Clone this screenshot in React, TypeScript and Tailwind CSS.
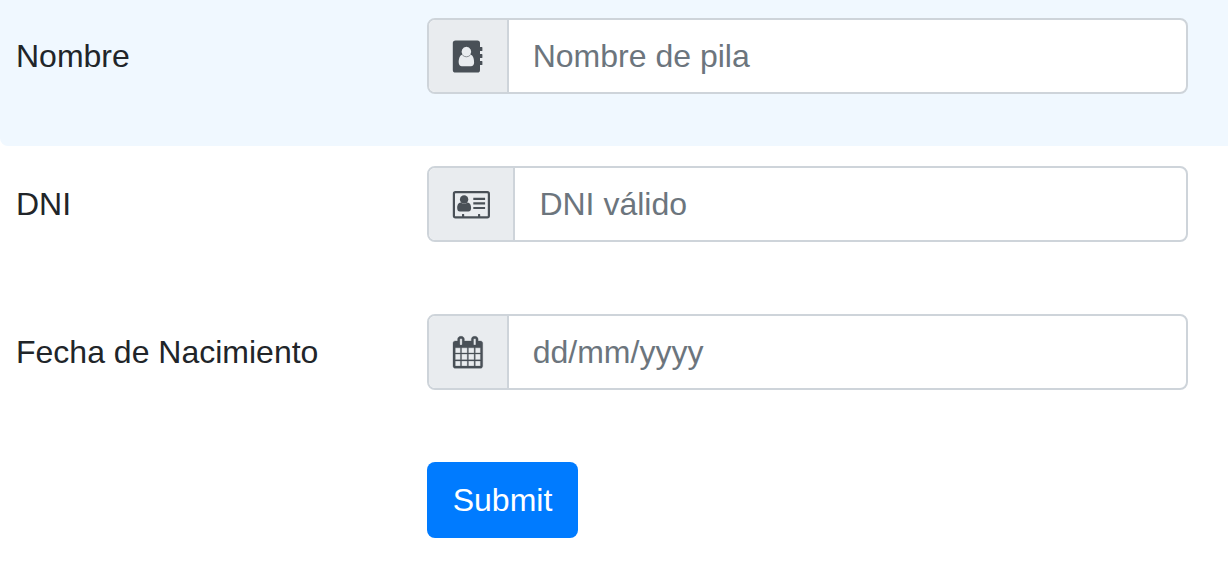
import type { ReactNode } from "react";

function AddressBookIcon() {
  return (
    <svg className="block h-9 w-[29.71px] overflow-visible" viewBox="0 0 29.71 36" fill="currentColor">
      <path
        fillRule="evenodd"
        d="M2.6 2.4H24.4Q27 2.4 27 5V9H28.8Q29.4 9 29.4 9.6V12.4Q29.4 13 28.8 13H27V16H28.8Q29.4 16 29.4 16.6V19.4Q29.4 20 28.8 20H27V23H28.8Q29.4 23 29.4 23.6V26.4Q29.4 27 28.8 27H27V32Q27 34.6 24.4 34.6H2.6Q-0.2 34.6 -0.2 32V5Q-0.2 2.4 2.6 2.4ZM13.4 8.8A4.8 4.8 0 0 0 9.5 16.4C6.5 17 5.7 21 5.7 24.5C5.7 26.8 7.1 28.2 8.8 28.2H18C19.8 28.2 21.1 26.8 21.1 24.5C21.1 21 20.3 17 17.3 16.4A4.8 4.8 0 0 0 13.4 8.8Z"
      />
      <path d="M9.5 17.2Q13.4 20.4 17.3 17.2" fill="none" stroke="currentColor" strokeWidth="0.6" />
    </svg>
  );
}

function IdCardIcon() {
  return (
    <svg className="block h-9 w-[36.4px] overflow-visible" viewBox="0 0 36.4 36" fill="currentColor">
      <rect x="0.9" y="6.1" width="35" height="25.2" rx="1.6" fill="none" stroke="currentColor" strokeWidth="2.2" />
      <circle cx="11.1" cy="13.5" r="4.2" />
      <path d="M7.7 16.5Q11.1 19.4 14.5 16.5C17.4 16.7 18.1 19.9 18.1 22.2C18.1 24.2 17 25.5 15.4 25.5H6.8C5.2 25.5 4.2 24.2 4.2 22.2C4.2 19.9 4.8 16.7 7.7 16.5Z" />
      <path d="M20.3 12.9H32.1M20.3 17.4H32.1M20.3 22H32.1" fill="none" stroke="currentColor" strokeWidth="2.2" />
      <path d="M9 28.4Q9 28 9.4 28H10.8Q11.2 28 11.2 28.4V31H9ZM25 28.4Q25 28 25.4 28H26.8Q27.2 28 27.2 28.4V31H25Z" />
    </svg>
  );
}

function CalendarIcon() {
  return (
    <svg
      className="block h-8 w-[29.71px] overflow-visible"
      viewBox="64 -20 1664 1792"
      fill="currentColor"
      stroke="currentColor"
      strokeWidth="16"
    >
      <path d="M192 1664h288v-288h-288v288zm352 0h320v-288h-320v288zm-352-352h288v-320h-288v320zm352 0h320v-320h-320v320zm-352-384h288v-288h-288v288zm736 736h320v-288h-320v288zm-384-736h320v-288h-320v288zm768 736h288v-288h-288v288zm-384-352h320v-320h-320v320zm-352-864v-288q0-13-9.5-22.5t-22.5-9.5h-64q-13 0-22.5 9.5t-9.5 22.5v288q0 13 9.5 22.5t22.5 9.5h64q13 0 22.5-9.5t9.5-22.5zm736 864h288v-320h-288v320zm-384-384h320v-288h-320v288zm384 0h288v-288h-288v288zm32-480v-288q0-13-9.5-22.5t-22.5-9.5h-64q-13 0-22.5 9.5t-9.5 22.5v288q0 13 9.5 22.5t22.5 9.5h64q13 0 22.5-9.5t9.5-22.5zm384-64v1280q0 52-38 90t-90 38h-1408q-52 0-90-38t-38-90v-1280q0-52 38-90t90-38h128v-96q0-66 47-113t113-47h64q66 0 113 47t47 113v96h384v-96q0-66 47-113t113-47h64q66 0 113 47t47 113v96h128q52 0 90 38t38 90z" />
    </svg>
  );
}

type FieldProps = {
  id: string;
  label: string;
  placeholder: string;
  icon: ReactNode;
  highlighted?: boolean;
};

function Field({ id, label, placeholder, icon, highlighted }: FieldProps) {
  return (
    <div className={highlighted ? "rounded-bl-lg bg-[#f0f8ff]" : ""}>
      <div className="flex pt-[18px] pr-10 pb-[52px] pl-4">
        <label htmlFor={id} className="w-[411px] shrink-0 pt-3.5 leading-[48px]">
          {label}
        </label>
        <div className="flex h-19 grow overflow-hidden rounded-lg border-2 border-[#ced4da] bg-white">
          <span className="flex items-center border-r-2 border-[#ced4da] bg-[#e9ecef] px-6 text-[#495057]">
            {icon}
          </span>
          <input
            id={id}
            type="text"
            placeholder={placeholder}
            className="min-w-0 grow px-6 text-[#495057] outline-none placeholder:text-[#6c757d] placeholder:opacity-100"
          />
        </div>
      </div>
    </div>
  );
}

export default function App() {
  return (
    <form className="flex h-[570px] flex-col gap-0.5 overflow-hidden bg-white font-['Liberation_Sans',Arial,sans-serif] text-[32px] leading-[48px] text-[#212529]">
      <Field id="nombre" label="Nombre" placeholder="Nombre de pila" icon={<AddressBookIcon />} highlighted />
      <Field id="dni" label="DNI" placeholder="DNI válido" icon={<IdCardIcon />} />
      <Field id="fecha" label="Fecha de Nacimiento" placeholder="dd/mm/yyyy" icon={<CalendarIcon />} />
      <div className="pt-[18px] pl-[427px]">
        <button type="button" className="h-19 w-[151px] rounded-lg bg-[#007bff] text-white">
          Submit
        </button>
      </div>
    </form>
  );
}
